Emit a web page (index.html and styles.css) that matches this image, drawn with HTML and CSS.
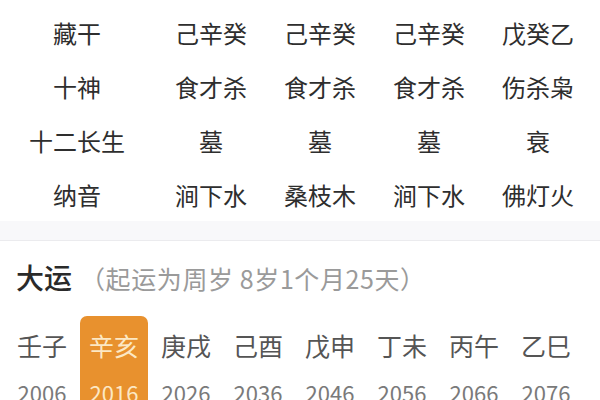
FILE: index.html
```html
<!DOCTYPE html>
<html lang="zh-CN">
<head>
<meta charset="utf-8">
<title>八字排盘</title>
<link rel="stylesheet" href="styles.css">
</head>
<body>
<div class="page">
  <section class="table">
    <div class="label">藏干</div><div class="cell">己辛癸</div><div class="cell">己辛癸</div><div class="cell">己辛癸</div><div class="cell">戊癸乙</div>
    <div class="label">十神</div><div class="cell">食才杀</div><div class="cell">食才杀</div><div class="cell">食才杀</div><div class="cell">伤杀枭</div>
    <div class="label">十二长生</div><div class="cell">墓</div><div class="cell">墓</div><div class="cell">墓</div><div class="cell">衰</div>
    <div class="label">纳音</div><div class="cell">涧下水</div><div class="cell">桑枝木</div><div class="cell">涧下水</div><div class="cell">佛灯火</div>
  </section>
  <div class="band"></div>
  <section class="dayun">
    <div class="dayun-head">
      <span class="dayun-title">大运</span>
      <span class="dayun-note">（起运为周岁 8岁1个月25天）</span>
    </div>
    <div class="dayun-list">
      <div class="item"><span class="gz">壬子</span><span class="yr">2006</span></div>
      <div class="item active"><span class="gz">辛亥</span><span class="yr">2016</span></div>
      <div class="item"><span class="gz">庚戌</span><span class="yr">2026</span></div>
      <div class="item"><span class="gz">己酉</span><span class="yr">2036</span></div>
      <div class="item"><span class="gz">戊申</span><span class="yr">2046</span></div>
      <div class="item"><span class="gz">丁未</span><span class="yr">2056</span></div>
      <div class="item"><span class="gz">丙午</span><span class="yr">2066</span></div>
      <div class="item"><span class="gz">乙巳</span><span class="yr">2076</span></div>
    </div>
  </section>
</div>
</body>
</html>
```

FILE: styles.css
```css
html, body {
  margin: 0;
  padding: 0;
  background: #ffffff;
}
body {
  width: 600px;
  height: 400px;
  overflow: hidden;
  font-family: "Noto Sans CJK SC", "Noto Sans", sans-serif;
}
.page {
  display: flex;
  flex-direction: column;
}
.table {
  display: grid;
  grid-template-columns: 152px repeat(4, 102px);
  grid-auto-rows: 54px;
  column-gap: 7px;
  padding: 5px 0 0 1px;
  color: #2e2e2e;
  font-size: 24px;
}
.label, .cell {
  display: flex;
  align-items: center;
  justify-content: center;
  white-space: nowrap;
}
.band {
  height: 19px;
  background: #f8f8fa;
  border-bottom: 1px solid #ebebee;
}
.dayun {
  padding-top: 18px;
}
.dayun-head {
  display: flex;
  align-items: baseline;
  height: 36px;
  line-height: 36px;
  padding-left: 16px;
}
.dayun-title {
  font-size: 28px;
  font-weight: 500;
  color: #2a2a2a;
}
.dayun-note {
  margin-left: 8px;
  font-size: 25px;
  letter-spacing: 0.6px;
  color: #9a9a9a;
}
.dayun-list {
  display: flex;
  gap: 4px;
  padding-left: 8px;
  margin-top: 21px;
}
.item {
  width: 68px;
  height: 83px;
  display: flex;
  flex-direction: column;
  align-items: center;
  padding-top: 14px;
  border-radius: 7px 7px 0 0;
}
.gz {
  font-size: 25px;
  line-height: 30px;
  color: #555;
}
.yr {
  margin-top: 18px;
  font-size: 22px;
  line-height: 28px;
  color: #7a7a7a;
}
.item.active {
  background: #e8912e;
}
.item.active .gz,
.item.active .yr {
  color: #fce8c4;
}
```
